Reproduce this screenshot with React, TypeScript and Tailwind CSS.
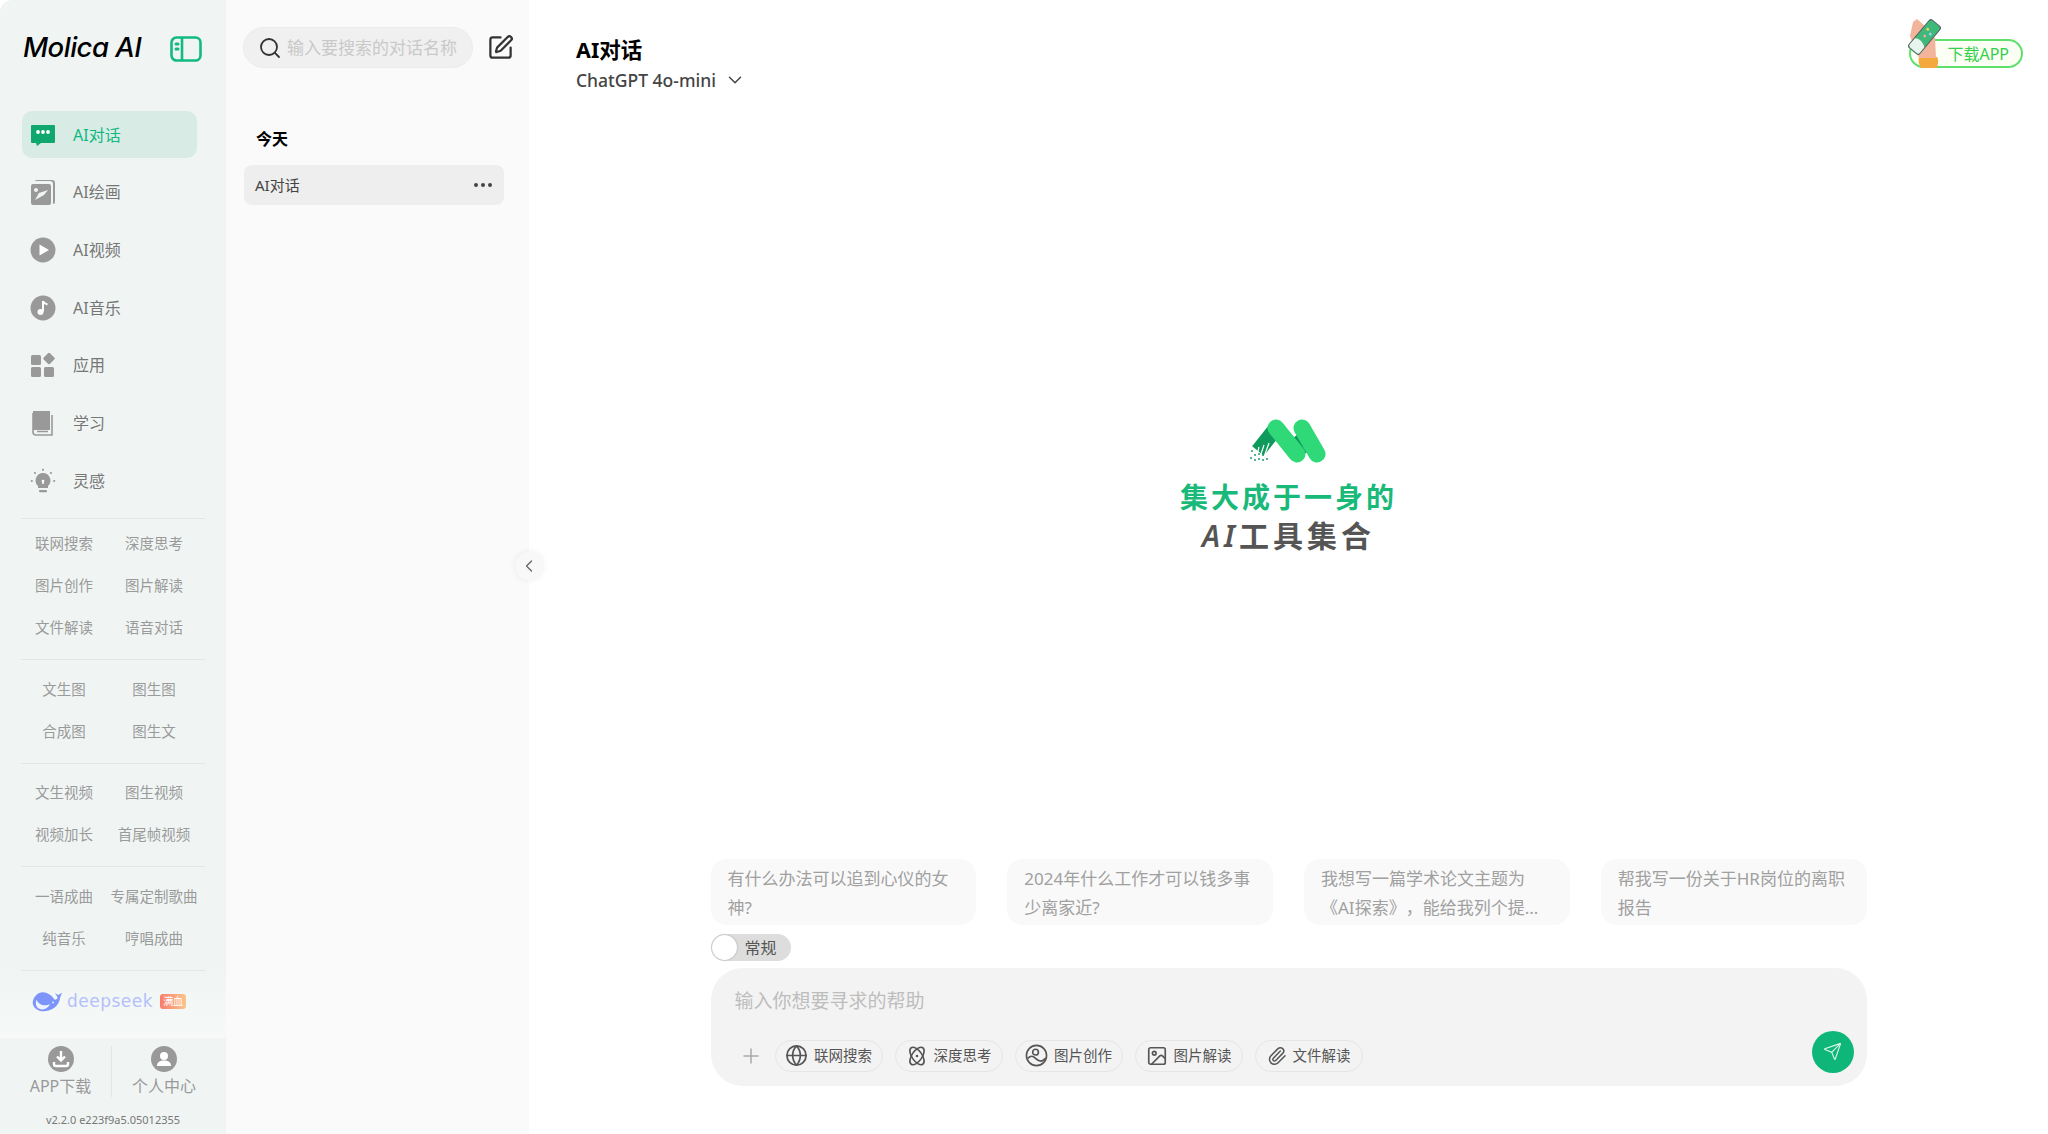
import { ChevronDown, ChevronLeft, Ellipsis, Globe, Image, Paperclip, Plus, Search, Send, SquarePen } from 'lucide-react';
import type { ReactNode } from 'react';

const cjk = { fontFamily: '"Noto Sans", "Noto Sans CJK SC", sans-serif' };

function ChatIcon() {
  return (
    <svg viewBox="0 0 26 24" className="w-[26px] h-[24px]">
      <path d="M2 2h22a1 1 0 0 1 1 1v16a1 1 0 0 1-1 1H11l-4 3-1-3H2a1 1 0 0 1-1-1V3a1 1 0 0 1 1-1z" fill="#0fa76e" />
      <circle cx="8" cy="9" r="1.9" fill="#fff" />
      <circle cx="13" cy="9" r="1.9" fill="#fff" />
      <circle cx="18" cy="9" r="1.9" fill="#fff" />
    </svg>
  );
}

function DrawIcon() {
  return (
    <svg viewBox="0 0 26 26" className="w-[26px] h-[26px]" fill="#999">
      <path d="M7 1h15a3 3 0 0 1 3 3v19a2 2 0 0 1-2 2v-20a3 3 0 0 0-3-3H5a2 2 0 0 1 2-1z" />
      <path fillRule="evenodd" d="M3 5h16a2 2 0 0 1 2 2v17a2 2 0 0 1-2 2H3a2 2 0 0 1-2-2V7a2 2 0 0 1 2-2zm3 4a2 2 0 1 0 0 4 2 2 0 0 0 0-4zm12 2L9 14l-4 7 9-5z" />
    </svg>
  );
}

function PlayIcon() {
  return (
    <svg viewBox="0 0 26 26" className="w-[26px] h-[26px]">
      <circle cx="13" cy="13" r="12.5" fill="#999" />
      <path d="M9.5 7.5 19 13l-9.5 5.5z" fill="#fff" />
    </svg>
  );
}

function MusicIcon() {
  return (
    <svg viewBox="0 0 26 26" className="w-[26px] h-[26px]">
      <circle cx="13" cy="13" r="12.5" fill="#999" />
      <path d="M13 6v10.5" stroke="#fff" strokeWidth="2" />
      <path d="M13 6c1 2.5 3 3 4.500 3.500" stroke="#fff" strokeWidth="2" fill="none" />
      <circle cx="10.500" cy="17" r="3" fill="#fff" />
    </svg>
  );
}

function AppsIcon() {
  return (
    <svg viewBox="0 0 26 26" className="w-[26px] h-[26px]" fill="#999">
      <rect x="1" y="3" width="10" height="10" rx="1.500" />
      <rect x="1" y="15" width="10" height="10" rx="1.500" />
      <rect x="14" y="15" width="10" height="10" rx="1.500" />
      <rect x="14.500" y="2" width="9" height="9" rx="1.500" transform="rotate(45 19 6.500)" />
    </svg>
  );
}

function BookIcon() {
  return (
    <svg viewBox="0 0 26 26" className="w-[26px] h-[26px]">
      <path d="M3 1h17v19H5a2 2 0 0 0-2 1z" fill="#999" />
      <path d="M3 3v19a3 3 0 0 0 3 3h16V5" fill="none" stroke="#999" strokeWidth="1.600" />
      <path d="M7 21.500h11" stroke="#999" strokeWidth="1.500" />
    </svg>
  );
}

function BulbIcon() {
  return (
    <svg viewBox="0 0 26 26" className="w-[26px] h-[26px]" fill="#999">
      <path d="M13 5a7.500 7.500 0 0 0-5 13v2h10v-2a7.500 7.500 0 0 0-5-13z" />
      <rect x="9" y="22" width="8" height="2.200" rx="1" />
      <circle cx="13" cy="13" r="1.300" fill="#fff" />
      <rect x="12.200" y="13" width="1.600" height="3" fill="#fff" />
      <circle cx="13" cy="1.800" r="1.100" />
      <circle cx="5" cy="5" r="1.100" />
      <circle cx="21" cy="5" r="1.100" />
      <circle cx="1.800" cy="13" r="1.100" />
      <circle cx="24.200" cy="13" r="1.100" />
    </svg>
  );
}

const navItems: { label: string; icon: ReactNode; active?: boolean }[] = [
  { label: 'AI对话', icon: <ChatIcon />, active: true },
  { label: 'AI绘画', icon: <DrawIcon /> },
  { label: 'AI视频', icon: <PlayIcon /> },
  { label: 'AI音乐', icon: <MusicIcon /> },
  { label: '应用', icon: <AppsIcon /> },
  { label: '学习', icon: <BookIcon /> },
  { label: '灵感', icon: <BulbIcon /> },
];

const miniGroups = [
  ['联网搜索', '深度思考', '图片创作', '图片解读', '文件解读', '语音对话'],
  ['文生图', '图生图', '合成图', '图生文'],
  ['文生视频', '图生视频', '视频加长', '首尾帧视频'],
  ['一语成曲', '专属定制歌曲', '纯音乐', '哼唱成曲'],
];

const suggestions = [
  '有什么办法可以追到心仪的女神?',
  '2024年什么工作才可以钱多事少离家近?',
  '我想写一篇学术论文主题为《AI探索》，能给我列个提...',
  '帮我写一份关于HR岗位的离职报告',
];

function AtomIcon() {
  return (
    <svg viewBox="0 0 24 24" className="w-[22px] h-[22px]" fill="none" stroke="#555" strokeWidth="1.800">
      <ellipse cx="12" cy="12" rx="5.500" ry="11" transform="rotate(-35 12 12)" />
      <ellipse cx="12" cy="12" rx="5.500" ry="11" transform="rotate(35 12 12)" />
      <circle cx="12" cy="12" r="1.400" fill="#555" stroke="none" />
    </svg>
  );
}

function PicCircleIcon() {
  return (
    <svg viewBox="0 0 24 24" className="w-[23px] h-[23px]" fill="none" stroke="#555" strokeWidth="1.700">
      <circle cx="12" cy="12" r="10.500" />
      <circle cx="11" cy="8.500" r="3" />
      <path d="M3 15c3-3 5-3 8 0s5 4 8 2l2-2" />
    </svg>
  );
}

const chips: { label: string; icon: ReactNode }[] = [
  { label: '联网搜索', icon: <Globe size={23} strokeWidth={1.8} color="#555" /> },
  { label: '深度思考', icon: <AtomIcon /> },
  { label: '图片创作', icon: <PicCircleIcon /> },
  { label: '图片解读', icon: <Image size={22} strokeWidth={1.8} color="#555" /> },
  { label: '文件解读', icon: <Paperclip size={20} strokeWidth={1.8} color="#555" /> },
];

function MLogo() {
  return (
    <svg viewBox="0 0 77 45" className="w-[77px] h-[45px]">
      <path d="M27 9 8 33" stroke="#0e9a5c" strokeWidth="15" />
      <path d="M9 29 7 37M14 27l-4 12M19 25l-5 14M24 26l-6 13" stroke="#fff" strokeWidth="1.200" />
      {[[2, 33], [5, 37], [1, 40], [5, 42], [9, 41], [13, 42], [9, 36], [13, 37], [17, 41]].map(([cx, cy]) => (
        <circle key={`${cx}-${cy}`} cx={cx} cy={cy} r="1" fill="#1b9e6a" />
      ))}
      <path d="M48 16 36 26l14 12 12-6z" fill="#0e9a5c" />
      <path d="M26 10 47 36" stroke="#2fd977" strokeWidth="17" strokeLinecap="round" />
      <path d="M52 10 67 36" stroke="#2fd977" strokeWidth="17" strokeLinecap="round" />
    </svg>
  );
}

function Whale() {
  return (
    <svg viewBox="0 0 34 24" className="w-[31px] h-[23px]">
      <path d="M10 2c7-1 12 4 15 8 2 0 3-1 3-3l-3-4 4 2 4-3-2 5c-1 8-6 13-13 15-7 2-15 0-17-7C0 10 4 3 10 2z" fill="#7d95fb" />
      <path d="M5 10c2 5 8 8 15 5-3 5-9 7-12 5-3-1-5-6-3-10z" fill="#eef3ff" />
      <circle cx="23" cy="13" r="1" fill="#eef3ff" />
    </svg>
  );
}

function HandPhone() {
  return (
    <svg viewBox="0 0 40 54" className="w-[40px] h-[54px]">
      <path d="M14 41h18c2 3 1 7 0 11H16c-2-3-3-7-2-11z" fill="#f3a93c" />
      <path d="M14 42h17l-1-20L20 10 12 3 8 6 5 20z" fill="#f2b49a" />
      <g transform="rotate(40 19.500 21)">
        <rect x="12" y="2.500" width="15" height="37" rx="3" fill="#566064" />
        <rect x="13" y="3.500" width="13" height="35" rx="2.200" fill="#3fb878" />
        <path d="M13 28c4-3 9-2 13 1v7a2.200 2.200 0 0 1-2.200 2.200h-8.600A2.200 2.200 0 0 1 13 36z" fill="#e9f4ee" />
        <circle cx="17" cy="13" r="1.400" fill="#f5d76e" />
        <circle cx="22" cy="15" r="1.400" fill="#8fd9ff" />
        <circle cx="19" cy="20" r="1.400" fill="#f2a3b3" />
      </g>
    </svg>
  );
}

function Sidebar() {
  return (
    <aside className="w-[226px] shrink-0 h-full bg-[#f0f5f4] flex flex-col rounded-tl-xl" style={cjk}>
      <div className="h-[111px] shrink-0 flex items-start justify-between pl-[23px] pr-[24px] pt-[27px]">
        <span className="text-[27.500px] leading-[40px] italic font-medium text-black tracking-[-0.5px]" style={{ fontFamily: 'Inter, sans-serif' }}>
          Molica AI
        </span>
        <svg viewBox="0 0 32 26" className="w-[32px] h-[26px] mt-[9px]" fill="none" stroke="#12b980" strokeWidth="2.600">
          <rect x="1.500" y="1.500" width="29" height="23" rx="5" />
          <path d="M12 2v22" />
          <path d="M6 8h2M6 13h2" strokeLinecap="round" strokeWidth="3" />
        </svg>
      </div>

      <nav className="flex flex-col gap-[10.7px] pl-[22px] pr-[29px]">
        {navItems.map((item) => (
          <div
            key={item.label}
            className={`h-[47px] flex items-center gap-[17px] pl-[8px] rounded-[10px] text-[16px] ${item.active ? 'bg-[#d8ece5] text-[#10b981]' : 'text-[#777]'}`}
          >
            <span className="w-[26px] flex justify-center">{item.icon}</span>
            <span>{item.label}</span>
          </div>
        ))}
      </nav>

      <div className="mt-[14px] px-[21px]">
        {miniGroups.map((group, i) => (
          <div key={i} className={`border-t border-[#e3e8e7] ${i === 0 ? 'pt-[4px] pb-[10px]' : 'pt-[8.500px] pb-[10px]'}`}>
            <div className="grid grid-cols-2 w-[180px] -ml-[2px] text-[14.500px] text-[#9a9a9a] text-center">
              {group.map((label) => (
                <span key={label} className="h-[42px] flex items-center justify-center whitespace-nowrap">
                  {label}
                </span>
              ))}
            </div>
          </div>
        ))}
      </div>

      <div className="flex-1 bg-gradient-to-b from-[#f0f5f4] to-[#f6f9f8]">
        <div className="border-t border-[#e3e8e7] mx-[21px] flex items-start pt-[19px] pl-[11px] gap-[4px]">
          <Whale />
          <span className="text-[17px] leading-[22px] text-[#b3c0fb] font-medium tracking-[0.5px]" style={{ fontFamily: '"DejaVu Sans", sans-serif' }}>
            deepseek
          </span>
          <span className="text-[10px] leading-[15px] mt-[4px] px-[3px] ml-[3px] text-white rounded-[3px] bg-gradient-to-r from-[#f77d6d] to-[#fbc58d]">满血</span>
        </div>
      </div>

      <div className="h-[96px] shrink-0 flex flex-col items-center">
        <div className="flex h-[72px] w-full items-center pb-[6px]">
          <div className="w-[112px] flex flex-col items-center pl-[10px] text-[16px] leading-[22px] text-[#999] border-r border-[#e2e7e6]">
            <svg viewBox="0 0 26 26" className="w-[26px] h-[26px] mb-[3px]">
              <circle cx="13" cy="13" r="13" fill="#999" />
              <path d="M13 5v9M9 10.500l4 4 4-4" stroke="#fff" strokeWidth="2.400" fill="none" />
              <path d="M6 16v2a2 2 0 0 0 2 2h10a2 2 0 0 0 2-2v-2" stroke="#fff" strokeWidth="2.400" fill="none" />
            </svg>
            <span>APP下载</span>
          </div>
          <div className="flex-1 flex flex-col items-center pr-[10px] text-[16px] leading-[22px] text-[#999]">
            <svg viewBox="0 0 26 26" className="w-[26px] h-[26px] mb-[3px]">
              <circle cx="13" cy="13" r="13" fill="#999" />
              <circle cx="13" cy="10" r="4" fill="#fff" />
              <path d="M6 20c0-4 3-5.500 7-5.500s7 1.500 7 5.500z" fill="#fff" />
            </svg>
            <span>个人中心</span>
          </div>
        </div>
        <div className="text-[11px] leading-[16px] mt-[2px] text-[#777]">v2.2.0 e223f9a5.05012355</div>
      </div>
    </aside>
  );
}

function HistoryPanel() {
  return (
    <section className="relative z-10 w-[303px] shrink-0 h-full bg-[#fafafa] flex flex-col pt-[27px]" style={cjk}>
      <div className="flex items-center pl-[17px] pr-[15px] justify-between">
        <div className="w-[230px] h-[41px] rounded-full bg-[#f0f0f0] border border-[#ececec] flex items-center pl-[14px] gap-[5px]">
          <Search size={24} strokeWidth={1.8} color="#333" />
          <span className="text-[17px] text-[#c9c9c9] whitespace-nowrap">输入要搜索的对话名称</span>
        </div>
        <SquarePen size={27} strokeWidth={2} color="#333" />
      </div>
      <div className="mt-[59px] pl-[30px] text-[16px] leading-[24px] font-bold text-black">今天</div>
      <div className="mt-[14px] mx-[18px] w-[260px] h-[40px] rounded-[8px] bg-[#eeeeee] flex items-center justify-between pl-[11px] pr-[9px] text-[15px] text-[#444]">
        <span>AI对话</span>
        <Ellipsis size={24} color="#444" />
      </div>
      <button className="absolute right-[-14px] top-[552px] w-[28px] h-[28px] rounded-full bg-[#f8f8f8] shadow-[0_0_6px_rgba(0,0,0,0.08)] flex items-center justify-center">
        <ChevronLeft size={20} strokeWidth={1.6} color="#666" />
      </button>
    </section>
  );
}

function MainArea() {
  return (
    <main className="relative flex-1 h-full bg-white flex flex-col" style={cjk}>
      <header className="h-[100px] shrink-0 pl-[47px] pt-[33px]">
        <div className="text-[21.500px] leading-[34px] font-bold text-black">AI对话</div>
        <div className="flex items-center gap-[8px] text-[17.500px] leading-[26px] font-medium text-[#444]">
          ChatGPT 4o-mini
          <ChevronDown size={22} strokeWidth={1.6} color="#444" />
        </div>
      </header>

      <div className="absolute top-[16px] right-[25px] w-[118px] h-[54px] flex items-end">
        <div className="w-[114px] ml-auto h-[29px] mb-[2px] rounded-full border-2 border-[#5fe06d] bg-[#fbfff4] flex items-center justify-end pr-[12px] text-[16px] text-[#35cf4c]">
          下载APP
        </div>
        <div className="absolute left-0 top-0">
          <HandPhone />
        </div>
      </div>

      <div className="flex-1 flex flex-col items-center justify-center pt-[14px]">
        <MLogo />
        <div className="mt-[15px] text-[28px] leading-[38px] font-bold text-[#19b97a] tracking-[3px]">集大成于一身的</div>
        <div className="text-[30px] leading-[40px] font-semibold text-[#555] tracking-[4px]"><span className="italic">AI</span>工具集合</div>
      </div>

      <div className="w-[1156px] mx-auto mb-[48px] flex flex-col">
        <div className="grid grid-cols-4 gap-[31px]">
          {suggestions.map((s) => (
            <div key={s} className="h-[66px] rounded-[16px] bg-[#f9f9f9] px-[17px] pt-[5px] text-[17px] leading-[29px] text-[#a0a0a0] overflow-hidden [text-spacing-trim:space-all]">
              {s}
            </div>
          ))}
        </div>
        <div className="mt-[9px] w-[80px] h-[27px] rounded-full bg-[#dddddd] flex items-center pl-[1px] gap-[8px] text-[16px] text-[#555]">
          <span className="w-[25px] h-[25px] rounded-full bg-white shadow-[0_0_2px_rgba(0,0,0,0.3)]" />
          常规
        </div>
        <div className="mt-[7px] h-[118px] rounded-[32px] bg-[#f3f3f3] flex flex-col pt-[17px]">
          <div className="pl-[24px] text-[19px] leading-[32px] text-[#bdbdbd]">输入你想要寻求的帮助</div>
          <div className="flex-1 flex items-center justify-between pl-[28px] pr-[13px]">
            <div className="flex items-center gap-[12px] mt-[8px]">
              <Plus size={24} strokeWidth={1.5} color="#aaa" />
              {chips.map((c) => (
                <div key={c.label} className="w-[108px] h-[32px] rounded-full border border-[#e6e6e6] flex items-center justify-center gap-[6px] text-[14.500px] text-[#555]">
                  {c.icon}
                  {c.label}
                </div>
              ))}
            </div>
            <div className="w-[42px] h-[42px] rounded-full bg-[#0fb67a] flex items-center justify-center">
              <Send size={19} strokeWidth={1.4} color="#dff7ee" />
            </div>
          </div>
        </div>
      </div>
    </main>
  );
}

export default function App() {
  return (
    <div className="w-[2048px] h-[1134px] flex overflow-hidden bg-white">
      <Sidebar />
      <HistoryPanel />
      <MainArea />
    </div>
  );
}
